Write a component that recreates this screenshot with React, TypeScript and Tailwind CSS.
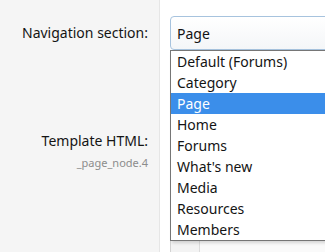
import React from "react";

const options = [
  "Default (Forums)",
  "Category",
  "Page",
  "Home",
  "Forums",
  "What's new",
  "Media",
  "Resources",
  "Members",
];

export default function App() {
  return (
    <div
      className="relative w-[325px] h-[252px] overflow-hidden bg-white text-[#141414]"
      style={{ fontFamily: '"Noto Sans", "Open Sans", sans-serif' }}
    >
      {/* Navigation section row */}
      <div className="flex">
        <div className="w-[160px] shrink-0 bg-[#f5f5f5] border-r border-[#e6e6e6] pt-[23px] pr-[11px] h-[128px] text-right text-[14px] leading-[20px]">
          Navigation section:
        </div>
        <div className="pl-[10px] pt-[16px]">
          <div className="w-[200px] h-[34px] rounded-l-[4px] border border-[#a7c3de] bg-gradient-to-b from-white to-[#f4f6f8] pl-[6px] flex items-center text-[14px]">
            Page
          </div>
        </div>
      </div>

      {/* Template HTML row */}
      <div className="flex">
        <div className="w-[160px] shrink-0 bg-[#f5f5f5] border-r border-[#e6e6e6] pt-[3px] pr-[11px] h-[124px] text-right">
          <div className="text-[14px] leading-[20px]">Template HTML:</div>
          <div className="text-[11px] leading-[14px] text-[#8c8c8c] mt-[5px]">_page_node.4</div>
        </div>
        <div className="pl-[10px]">
          <div className="w-[200px] h-[160px] flex border border-[#d3d3d3] bg-[#fafafa]">
            <div className="w-[29px] shrink-0 border-r border-[#dcdcdc] bg-[#f3f3f3]" />
            <div className="flex-1" />
          </div>
        </div>
      </div>

      {/* Open dropdown list */}
      <div className="absolute left-[170px] top-[50px] w-[180px] border border-[#767676] bg-white shadow-[2px_2px_3px_rgba(0,0,0,0.15)] py-0">
        {options.map((o) => (
          <div
            key={o}
            className={`h-[21px] pl-[6px] text-[14px] leading-[21px] ${
              o === "Page" ? "bg-[#3b8eea] text-white" : ""
            }`}
          >
            {o}
          </div>
        ))}
      </div>
    </div>
  );
}
